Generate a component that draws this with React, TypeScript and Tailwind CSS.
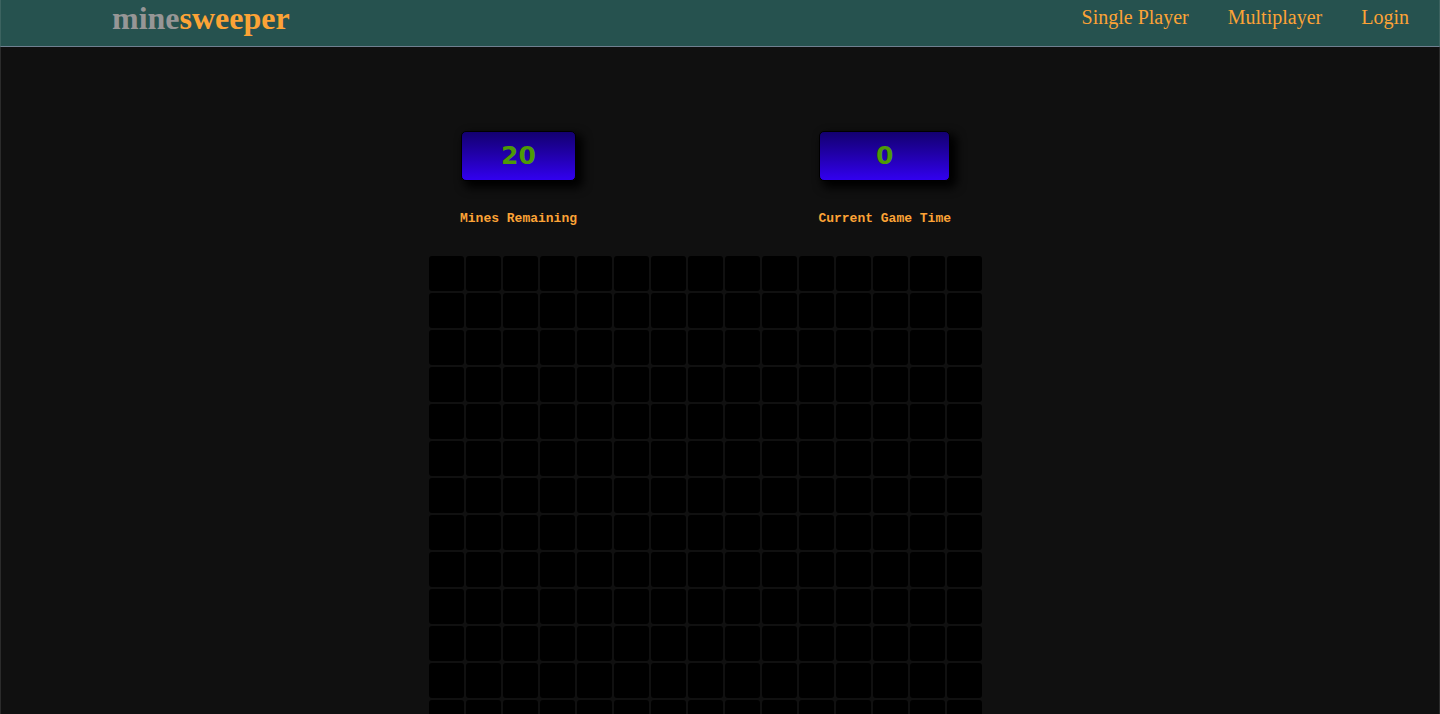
const ROWS = 15;
const COLUMNS = 15;

const links = [
  { label: 'Single Player', href: '#single-player' },
  { label: 'Multiplayer', href: '#multiplayer' },
  { label: 'Login', href: '#login' },
];

function Header() {
  return (
    <header className="flex h-[47px] items-start justify-between border-x border-b border-x-[#3c6360] border-b-[#708090] bg-[#26524f] pr-[30px] pl-[111px] font-['Liberation_Serif',serif] text-[#fca336]">
      <a href="#home" className="text-[32px] leading-[37px] font-bold">
        <span className="text-[#969696]">mine</span>sweeper
      </a>
      <nav className="flex gap-[39px] pt-[3px] text-xl leading-7">
        {links.map((link) => (
          <a key={link.label} href={link.href}>
            {link.label}
          </a>
        ))}
      </nav>
    </header>
  );
}

function Counter({ label, value }: { label: string; value: number }) {
  return (
    <div className="flex flex-col">
      <div className="mx-px flex h-[50px] items-center justify-center rounded-[5px] border border-black bg-linear-to-b from-[#130070] to-[#3200f0] font-['DejaVu_Sans',sans-serif] text-[25px] leading-8 font-bold text-[#4e9a06] shadow-[5px_5px_10px_2px_#000]">
        {value}
      </div>
      <p className="mt-[30px] font-['Courier_New','Liberation_Mono',monospace] text-[13px] leading-4 font-bold text-[#fca336]">
        {label}
      </p>
    </div>
  );
}

function Board() {
  const cells = Array.from({ length: ROWS * COLUMNS }, (_, index) => index);
  return (
    <div className="grid grid-cols-[repeat(15,35px)] gap-0.5">
      {cells.map((cell) => (
        <button
          key={cell}
          type="button"
          aria-label={`Row ${Math.floor(cell / COLUMNS) + 1}, column ${(cell % COLUMNS) + 1}`}
          className="h-[35px] rounded-[3px] bg-black"
        />
      ))}
    </div>
  );
}

export default function App() {
  return (
    <div className="flex min-h-screen flex-col bg-[#101010]">
      <Header />
      <main className="flex grow justify-center border-x border-[#2b2b2b] pt-[84px] pr-[29px] pb-8">
        <div className="flex flex-col gap-[29px]">
          <div className="flex justify-between px-[31px]">
            <Counter label="Mines Remaining" value={20} />
            <Counter label="Current Game Time" value={0} />
          </div>
          <Board />
        </div>
      </main>
    </div>
  );
}
